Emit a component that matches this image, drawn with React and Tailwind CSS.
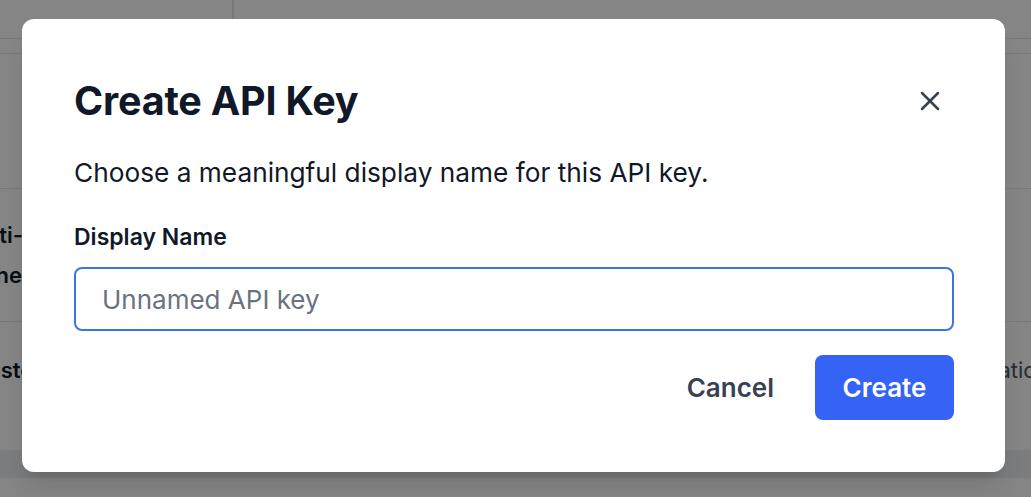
import { X } from 'lucide-react';

function BackgroundPage() {
  return (
    <div className="flex h-full w-full flex-col bg-white text-[22px] text-[#111827]">
      <div className="flex h-[39px] border-b border-[#e5e7eb]">
        <div className="w-[234px] border-r-2 border-[#e5e7eb]" />
        <div className="flex-1" />
      </div>
      <div className="h-[15px] border-b border-[#e5e7eb]" />
      <div className="h-[135px] border-b border-[#e5e7eb]" />
      <div className="flex h-[133px] flex-col justify-center border-b border-[#e5e7eb] font-semibold leading-[40px]">
        <div className="flex w-[23px] justify-end whitespace-nowrap">Multi-</div>
        <div className="flex w-[22px] justify-end whitespace-nowrap">the</div>
      </div>
      <div className="flex h-[128px] items-start pt-[34px] leading-[28px]">
        <span className="-ml-[29px] whitespace-nowrap font-semibold">Customer</span>
        <span className="ml-auto w-[84px] shrink-0 whitespace-nowrap text-[#4b5563]">Operations</span>
      </div>
      <div className="h-[28px] bg-[#eceef1]" />
      <div className="flex-1" />
    </div>
  );
}

export default function App() {
  return (
    <div className="relative h-[497px] w-[1031px] overflow-hidden font-['Inter',sans-serif]">
      <BackgroundPage />
      <div className="absolute inset-0 flex items-start bg-black/[0.48] pl-[22px] pt-[19px]">
        <div className="w-[983px] rounded-xl bg-white pb-[52px] pl-[52px] pr-[51px] pt-[62px] shadow-xl">
          <div className="flex h-[40px] items-center justify-between">
            <h2 className="text-[39.5px] font-bold leading-[40px] tracking-[-0.2px] text-[#111827]">
              Create API Key
            </h2>
            <button className="mr-[8px] text-[#374151]">
              <X size={32} strokeWidth={1.9} />
            </button>
          </div>
          <p className="mt-[36px] text-[26.25px] leading-[32px] text-[#111827]">
            Choose a meaningful display name for this API key.
          </p>
          <label className="mt-[34px] block text-[23px] font-semibold leading-[28px] text-[#111827]">
            Display Name
          </label>
          <input
            autoFocus
            placeholder="Unnamed API key"
            className="mt-[16px] box-border block h-[64px] w-full rounded-lg border-2 border-[#3b76e0] px-[26px] text-[26px] text-[#111827] caret-[#111827] placeholder:text-[#6b7280] outline-none"
          />
          <div className="mt-[24px] flex items-center justify-end gap-[41px]">
            <button className="text-[26px] font-semibold text-[#374151]">Cancel</button>
            <button className="h-[65px] w-[139px] rounded-lg bg-[#3563f5] text-[26px] font-semibold text-white">
              Create
            </button>
          </div>
        </div>
      </div>
    </div>
  );
}
